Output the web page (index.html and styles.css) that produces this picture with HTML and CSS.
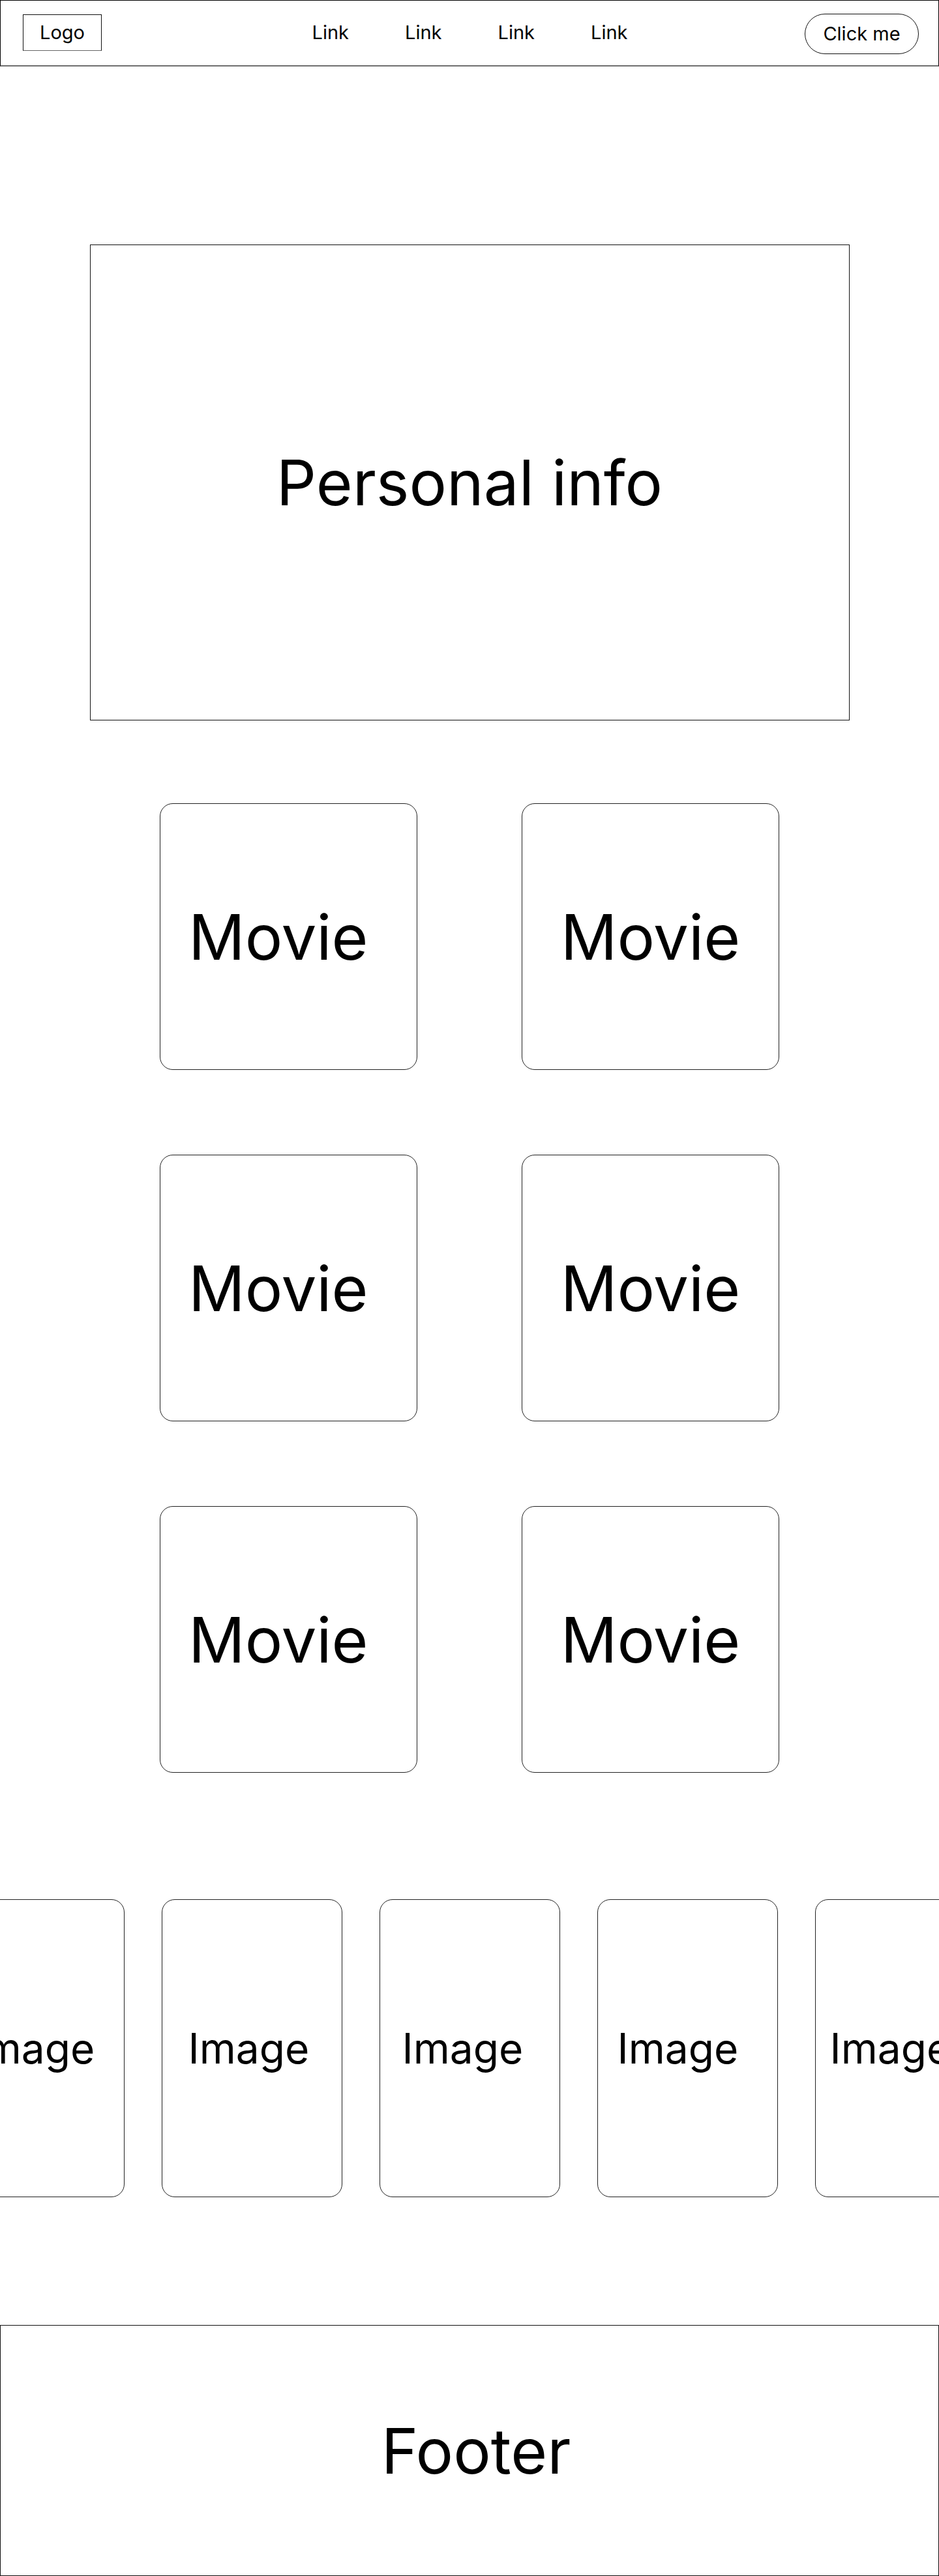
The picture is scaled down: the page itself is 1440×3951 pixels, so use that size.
FILE: index.html
```html
<!DOCTYPE html>
<html lang="en">
<head>
<meta charset="utf-8">
<title>Wireframe</title>
<link rel="stylesheet" href="styles.css">
</head>
<body>
<header class="nav">
  <div class="logo">Logo</div>
  <nav class="links">
    <a class="link" href="#">Link</a>
    <a class="link" href="#">Link</a>
    <a class="link" href="#">Link</a>
    <a class="link" href="#">Link</a>
  </nav>
  <button class="cta" type="button">Click me</button>
</header>

<section class="info">Personal info</section>

<section class="movies">
  <div class="movie movie-left">Movie</div>
  <div class="movie">Movie</div>
  <div class="movie movie-left">Movie</div>
  <div class="movie">Movie</div>
  <div class="movie movie-left">Movie</div>
  <div class="movie">Movie</div>
</section>

<section class="gallery">
  <div class="image">Image</div>
  <div class="image">Image</div>
  <div class="image">Image</div>
  <div class="image">Image</div>
  <div class="image">Image</div>
</section>

<footer class="footer">Footer</footer>
</body>
</html>
```

FILE: styles.css
```css
* {
  box-sizing: border-box;
}

html, body {
  margin: 0;
  padding: 0;
  background: #ffffff;
  color: #000000;
  font-family: Inter, "Noto Sans", "Liberation Sans", sans-serif;
}

body {
  width: 1440px;
  overflow-x: hidden;
}

/* Navigation */
.nav {
  height: 102px;
  display: grid;
  grid-template-columns: 1fr auto 1fr;
  align-items: center;
  padding: 0 30px 0 34px;
  border: 1px solid #000;
  border-bottom: 2px solid #6f6f6f;
}

.logo {
  justify-self: start;
  width: 121px;
  height: 56px;
  margin-top: -2px;
  display: flex;
  align-items: center;
  justify-content: center;
  border: 1px solid #111;
  border-bottom-color: #666;
  font-size: 29px;
}

.links {
  display: flex;
  gap: 86px;
  margin-top: -2px;
  margin-left: -3px;
}

.link {
  color: #000;
  text-decoration: none;
  font-size: 29px;
}

.cta {
  justify-self: end;
  height: 62px;
  width: 175px;
  margin-top: 2px;
  padding: 0;
  border: 1px solid #111;
  border-radius: 31px;
  background: #fff;
  color: #000;
  font-family: inherit;
  font-size: 29px;
}

/* Personal info */
.info {
  width: 1165px;
  height: 730px;
  margin: 273px auto 0;
  display: flex;
  align-items: center;
  justify-content: center;
  border: 1px solid #111;
  font-size: 96px;
}

/* Movies */
.movies {
  margin-top: 127px;
  display: grid;
  grid-template-columns: 395px 395px;
  grid-auto-rows: 409px;
  column-gap: 160px;
  row-gap: 130px;
  justify-content: center;
}

.movie {
  display: flex;
  align-items: center;
  justify-content: center;
  border: 1px solid #222;
  border-radius: 20px;
  font-size: 96px;
}

.movie-left {
  justify-content: flex-start;
  padding-left: 43px;
}

/* Image carousel */
.gallery {
  margin-top: 194px;
  display: flex;
  justify-content: center;
  gap: 57px;
  overflow: hidden;
}

.image {
  flex: 0 0 277px;
  height: 457px;
  display: flex;
  align-items: center;
  border: 1px solid #222;
  border-radius: 20px;
  font-size: 64px;
}

.image:nth-child(1) { padding-left: 45px; }
.image:nth-child(2) { padding-left: 40px; }
.image:nth-child(3) { padding-left: 34px; }
.image:nth-child(4) { padding-left: 30px; }
.image:nth-child(5) { padding-left: 22px; }

/* Footer */
.footer {
  margin-top: 196px;
  height: 385px;
  display: flex;
  align-items: center;
  justify-content: center;
  padding-left: 20px;
  border: 1px solid #111;
  font-size: 96px;
}
```
